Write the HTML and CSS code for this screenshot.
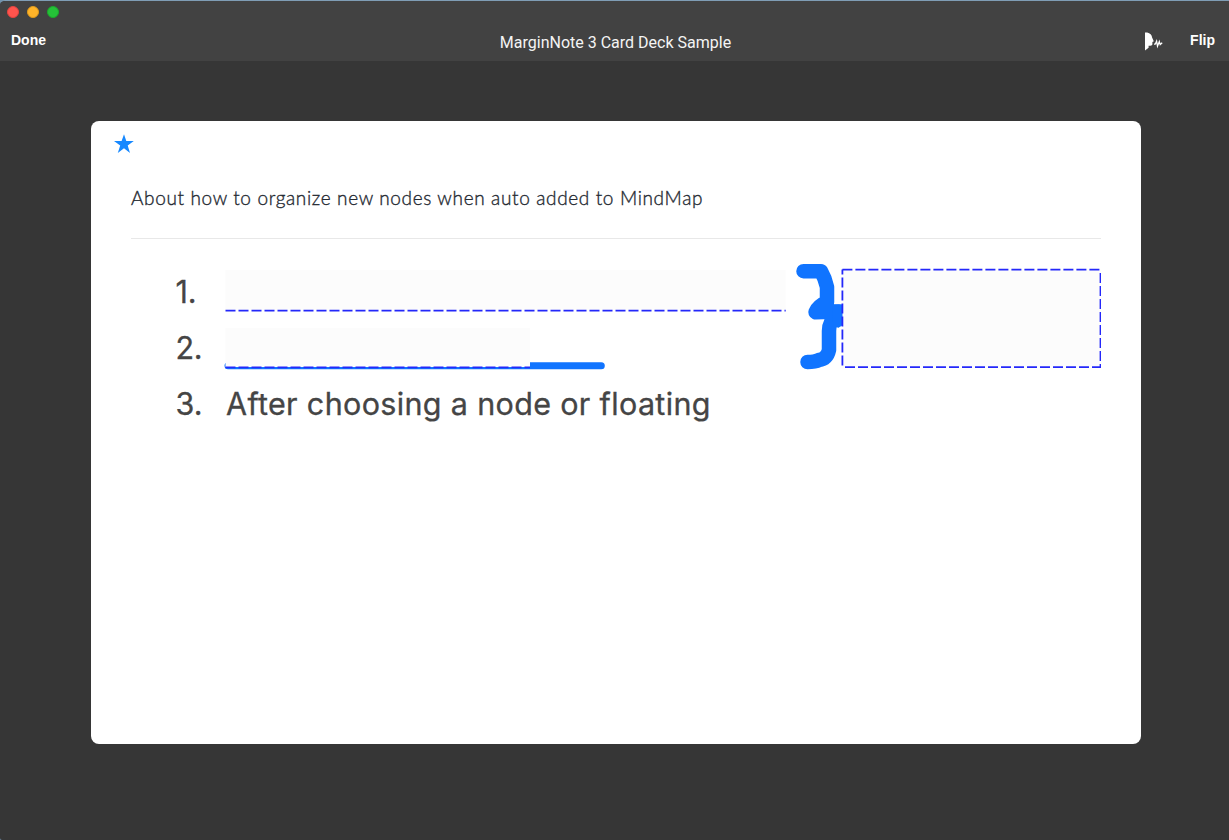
FILE: index.html
```html
<!DOCTYPE html>
<html lang="en">
<head>
<meta charset="utf-8">
<title>MarginNote 3 Card Deck Sample</title>
<link rel="stylesheet" href="styles.css">
</head>
<body>
<div class="window">
  <header class="toolbar">
    <div class="lights"><span class="light close"></span><span class="light minimize"></span><span class="light zoom"></span></div>
    <div class="actions">
      <div class="side"><span class="action">Done</span></div>
      <h1 class="title">MarginNote 3 Card Deck Sample</h1>
      <div class="side right">
        <svg class="speak" width="18" height="19" viewBox="0 0 18 19" aria-label="Speak"><path d="M0 0.5H2.2C5 1 7 3 7.1 5.6L8.8 9.3L7.4 10V12.2Q7.2 13.7 3.6 13.8V15.7L0 18.5Z" fill="#fff"/><path d="M9 12.2H10.2L11.6 9.2L12.5 14.2L14.3 9.5L15.2 12.6L17.2 10.8" fill="none" stroke="#fff" stroke-width="1.3"/></svg>
        <span class="action">Flip</span>
      </div>
    </div>
  </header>
  <main class="stage">
    <article class="card">
      <svg class="star" width="20" height="20" viewBox="0 0 20 20"><path d="M10 .3L12.3 7.1H19.8L13.7 11.5L16 18.9L10 14.3L3.8 18.9L6.2 11.5L0 7.1H7.6Z" fill="#1688ff"/></svg>
      <h2 class="question"><span>About how to organize new nodes when auto added to MindMap</span></h2>
      <svg class="excerpt" width="970" height="200" viewBox="131 239 970 200">
        <g class="note">
          <text x="175.5" y="302.5" textLength="21">1.</text>
          <text x="175.5" y="358.8" textLength="27">2.</text>
          <text x="175.5" y="415" textLength="27">3.</text>
          <text x="226" y="415" textLength="484.5">After choosing a node or floating</text>
        </g>
        <g class="ink">
          <path d="M803.5 271.2H821Q825 278 827 287V302Q818 306 815.5 312.2L839 311.5Q829 321 829 331V350Q827 359 819 360Q815 362 807.5 362" stroke-width="14.5"/>
          <path d="M228 365.7H601.3" stroke-width="7"/>
          <path class="joint" d="M833 304.5H843V325L838 328L832 322Z"/>
        </g>
        <g class="mask">
          <rect x="225.5" y="270" width="560" height="40.5"/>
          <rect x="225.5" y="328" width="304.5" height="39"/>
          <rect x="842.5" y="269.5" width="258" height="98"/>
        </g>
        <g class="dashes">
          <path d="M225.5 310.7H785.7"/>
          <path d="M225.5 367.3H530"/>
          <path d="M842.4 269.6H1100.5"/>
          <path d="M1100.5 273V368"/>
          <path d="M1102 367.2H842"/>
          <path d="M842.4 367.5V269.5" stroke-dashoffset="-2"/>
        </g>
      </svg>
    </article>
  </main>
</div>
</body>
</html>
```
FILE: styles.css
```css
* { box-sizing: border-box; }
body { margin: 0; background: #7192ad; }
.window {
  width: 1229px;
  height: 840px;
  border-top: 1px solid #7f9db5;
  border-radius: 5px 0 0 2px;
  background: #363636;
  overflow: hidden;
}
.toolbar { height: 60px; background: #424242; }
.lights { display: flex; gap: 8px; padding: 5px 7px 0; height: 23px; }
.light { width: 12px; height: 12px; border-radius: 50%; border: 1px solid; }
.close { background: #ff544d; border-color: #e5443f; }
.minimize { background: #ffb429; border-color: #e09b1b; }
.zoom { background: #25c138; border-color: #1ba92b; }
.actions {
  display: grid;
  grid-template-columns: 1fr auto 1fr;
  align-items: start;
  padding: 0 14px 0 11px;
  color: #fff;
}
.side { display: flex; padding-top: 8px; }
.right { justify-content: flex-end; gap: 27px; }
.action { font: bold 14px/16px "Liberation Sans", Arial, sans-serif; }
.speak { display: block; }
.title { margin: 9px 0 0; padding-left: 5px; font: 400 16px/20px Roboto, sans-serif; color: #f4f4f4; }
.stage { padding: 60px 88px 0 91px; }
.card { width: 1050px; height: 623px; padding: 13px 40px; border-radius: 8px; background: #fff; }
.star { display: block; margin-left: -17px; }
.question {
  height: 85px;
  margin: 0;
  padding-top: 30px;
  border-bottom: 1px solid #e8e8e8;
  font: 300 19px/28px Lato, sans-serif;
  letter-spacing: .645px;
  color: #252a32;
  -webkit-text-stroke: .35px #252a32;
  white-space: nowrap;
}
.excerpt { display: block; overflow: hidden; }
.note { font: 400 30.5px Inter, sans-serif; fill: #454545; stroke: #454545; stroke-width: .3px; }
.ink { fill: none; stroke: #1074ff; stroke-linecap: round; stroke-linejoin: round; }
.joint { fill: #1074ff; stroke: none; }
.mask { fill: #fcfcfc; }
.dashes { fill: none; stroke: #2428fa; stroke-width: 1.8; stroke-dasharray: 10 3; }
```
